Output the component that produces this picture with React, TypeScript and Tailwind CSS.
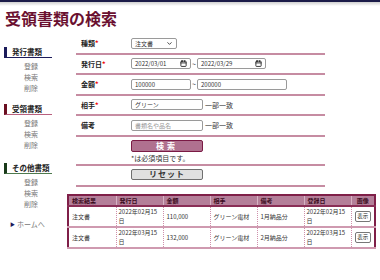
import { ChevronDown, Calendar } from 'lucide-react';

const rows = [
  { kind: '注文書', issued: '2022年02月15日', amount: '110,000', partner: 'グリーン電材', note: '1月納品分', registered: '2022年02月15日' },
  { kind: '注文書', issued: '2022年03月15日', amount: '132,000', partner: 'グリーン電材', note: '2月納品分', registered: '2022年03月15日' },
];

function NavGroup({
  title,
  barClass,
  className,
}: {
  title: string;
  barClass: string;
  className: string;
}) {
  return (
    <div className={className}>
      <div className={`w-[48px] h-[11px] border-l-[3px] border-b pl-[5px] text-[7.5px] leading-[10px] font-bold text-[#222] whitespace-nowrap ${barClass}`}>
        {title}
      </div>
      <div className="pt-[3px] pl-[20px] text-[7px] leading-[11px] text-[#777]">
        <div>登録</div>
        <div>検索</div>
        <div>削除</div>
      </div>
    </div>
  );
}

function Label({ text, required }: { text: string; required?: boolean }) {
  return (
    <div className="w-[50px] text-[7px] font-bold text-[#222]">
      {text}
      {required && <span className="text-[#e00]">*</span>}
    </div>
  );
}

function Field({ value, className, muted }: { value: string; className: string; muted?: boolean }) {
  return (
    <div className={`h-[11px] border border-[#9a9a9a] rounded-[2px] bg-white px-[3px] flex items-center text-[6px] ${muted ? 'text-[#999]' : 'text-[#333]'} ${className}`}>
      {value}
    </div>
  );
}

function DateField({ value, className }: { value: string; className: string }) {
  return (
    <div className={`h-[11px] border border-[#9a9a9a] rounded-[2px] bg-white px-[3px] flex items-center justify-between text-[6px] text-[#333] ${className}`}>
      <span>{value}</span>
      <Calendar className="w-[7px] h-[7px] text-[#222]" strokeWidth={3} />
    </div>
  );
}

function FormRow({ children }: { children: React.ReactNode }) {
  return (
    <div className="h-[20.5px] flex items-center border-b-2 border-[#c68ca2] pl-[5px]">{children}</div>
  );
}

export default function App() {
  return (
    <div className="w-[380px] h-[280px] bg-white border-t-2 border-[#1b1b48] overflow-hidden font-['Noto_Sans_CJK_JP','Noto_Sans',sans-serif]">
      <div className="h-[4px] bg-gradient-to-b from-[#cfcfcf] to-white" />
      <h1 className="mt-[2px] pl-[5px] text-[16px] leading-[20px] font-bold text-[#6a1030]">受領書類の検索</h1>

      <div className="flex mt-[6px]">
        {/* Sidebar */}
        <div className="w-[67px] shrink-0 pl-[4px]">
          <NavGroup title="発行書類" barClass="border-[#1b1b5a]" className="mt-[13px]" />
          <NavGroup title="受領書類" barClass="border-l-[#6a0f20] border-b-[#b8607e]" className="mt-[10px]" />
          <NavGroup title="その他書類" barClass="border-l-[#1a3a1a] border-b-[#4e7a4e]" className="mt-[12px]" />
          <div className="mt-[9px] pl-[6px] flex items-center gap-[2px] text-[7px] leading-[10px] text-[#777]">
            <span className="text-[5px] text-[#1b1b5a]">▶</span>
            <span>ホームへ</span>
          </div>
        </div>

        {/* Main */}
        <div className="w-[309px]">
          <div className="ml-[9px] w-[249px]">
            <FormRow>
              <Label text="種類" required />
              <div className="h-[11px] w-[46px] border border-[#9a9a9a] rounded-[2px] bg-white px-[3px] flex items-center justify-between text-[6px] text-[#333]">
                <span>注文書</span>
                <ChevronDown className="w-[7px] h-[7px]" strokeWidth={3} />
              </div>
            </FormRow>
            <FormRow>
              <Label text="発行日" required />
              <DateField value="2022/03/01" className="w-[60px]" />
              <span className="w-[6px] text-center text-[7px] text-[#333]">~</span>
              <DateField value="2022/03/29" className="w-[69px]" />
            </FormRow>
            <FormRow>
              <Label text="金額" required />
              <Field value="100000" className="w-[60px]" />
              <span className="w-[6px] text-center text-[7px] text-[#333]">~</span>
              <Field value="200000" className="w-[90px]" />
            </FormRow>
            <FormRow>
              <Label text="相手" required />
              <Field value="グリーン" className="w-[72px]" />
              <span className="ml-[2px] text-[7px] text-[#333]">一部一致</span>
            </FormRow>
            <FormRow>
              <Label text="備考" />
              <Field value="書類名や品名" className="w-[72px]" muted />
              <span className="ml-[2px] text-[7px] text-[#333]">一部一致</span>
            </FormRow>
            <div className="border-b-2 border-[#c68ca2] pl-[55px] pt-[3px] pb-[1px]">
              <button className="w-[72px] h-[12px] flex items-center justify-center bg-[#b0718f] border border-[#7a1a44] rounded-[2px] text-white text-[8px] font-bold tracking-[3px]">
                検索
              </button>
              <div className="mt-[1px] text-[7px] leading-[10px] text-[#333]">*は必須項目です。</div>
            </div>
            <div className="border-b-2 border-[#c68ca2] pl-[55px] pt-[3px] pb-[5px]">
              <button className="w-[72px] h-[11px] flex items-center justify-center bg-[#e0e0e0] border border-[#6f6f6f] rounded-[2px] text-[#333] text-[8px] font-bold tracking-[1px]">
                リセット
              </button>
            </div>
          </div>

          <table className="mt-[7px] w-[309px] border-collapse border-2 border-[#7f1f48] table-fixed text-[6px] text-[#333]">
            <colgroup>
              <col className="w-[48px]" />
              <col className="w-[47px]" />
              <col className="w-[47px]" />
              <col className="w-[47px]" />
              <col className="w-[47px]" />
              <col className="w-[47px]" />
              <col className="w-[24px]" />
            </colgroup>
            <thead>
              <tr className="h-[11px] bg-[#b47f99] border-b-2 border-[#8a2e56]">
                {['検索結果', '発行日', '金額', '相手', '備考', '登録日'].map((h) => (
                  <th key={h} className="px-[3px] text-left font-bold text-[6px] text-[#3a0a1c] border-r border-[#d7b3c3]">
                    {h}
                  </th>
                ))}
                <th className="px-[3px] text-center font-bold text-[6px] text-[#3a0a1c]">画像</th>
              </tr>
            </thead>
            <tbody>
              {rows.map((r, i) => (
                <tr key={i} className="h-[21px] border-b-2 border-[#cf9ab0]">
                  <td className="px-[3px] border-r border-dotted border-[#cf8fab]">{r.kind}</td>
                  <td className="px-[2px] leading-[9px] border-r border-dotted border-[#cf8fab]">{r.issued}</td>
                  <td className="px-[3px] border-r border-dotted border-[#cf8fab]">{r.amount}</td>
                  <td className="px-[3px] border-r border-dotted border-[#cf8fab]">{r.partner}</td>
                  <td className="px-[3px] border-r border-dotted border-[#cf8fab]">{r.note}</td>
                  <td className="px-[2px] leading-[9px] border-r border-dotted border-[#cf8fab]">{r.registered}</td>
                  <td className="px-[3px]">
                    <button className="mx-auto w-[16px] h-[11px] flex items-center justify-center bg-white border border-[#777] rounded-[2px] text-[5.5px] text-[#222]">
                      表示
                    </button>
                  </td>
                </tr>
              ))}
            </tbody>
          </table>
        </div>
      </div>
    </div>
  );
}
